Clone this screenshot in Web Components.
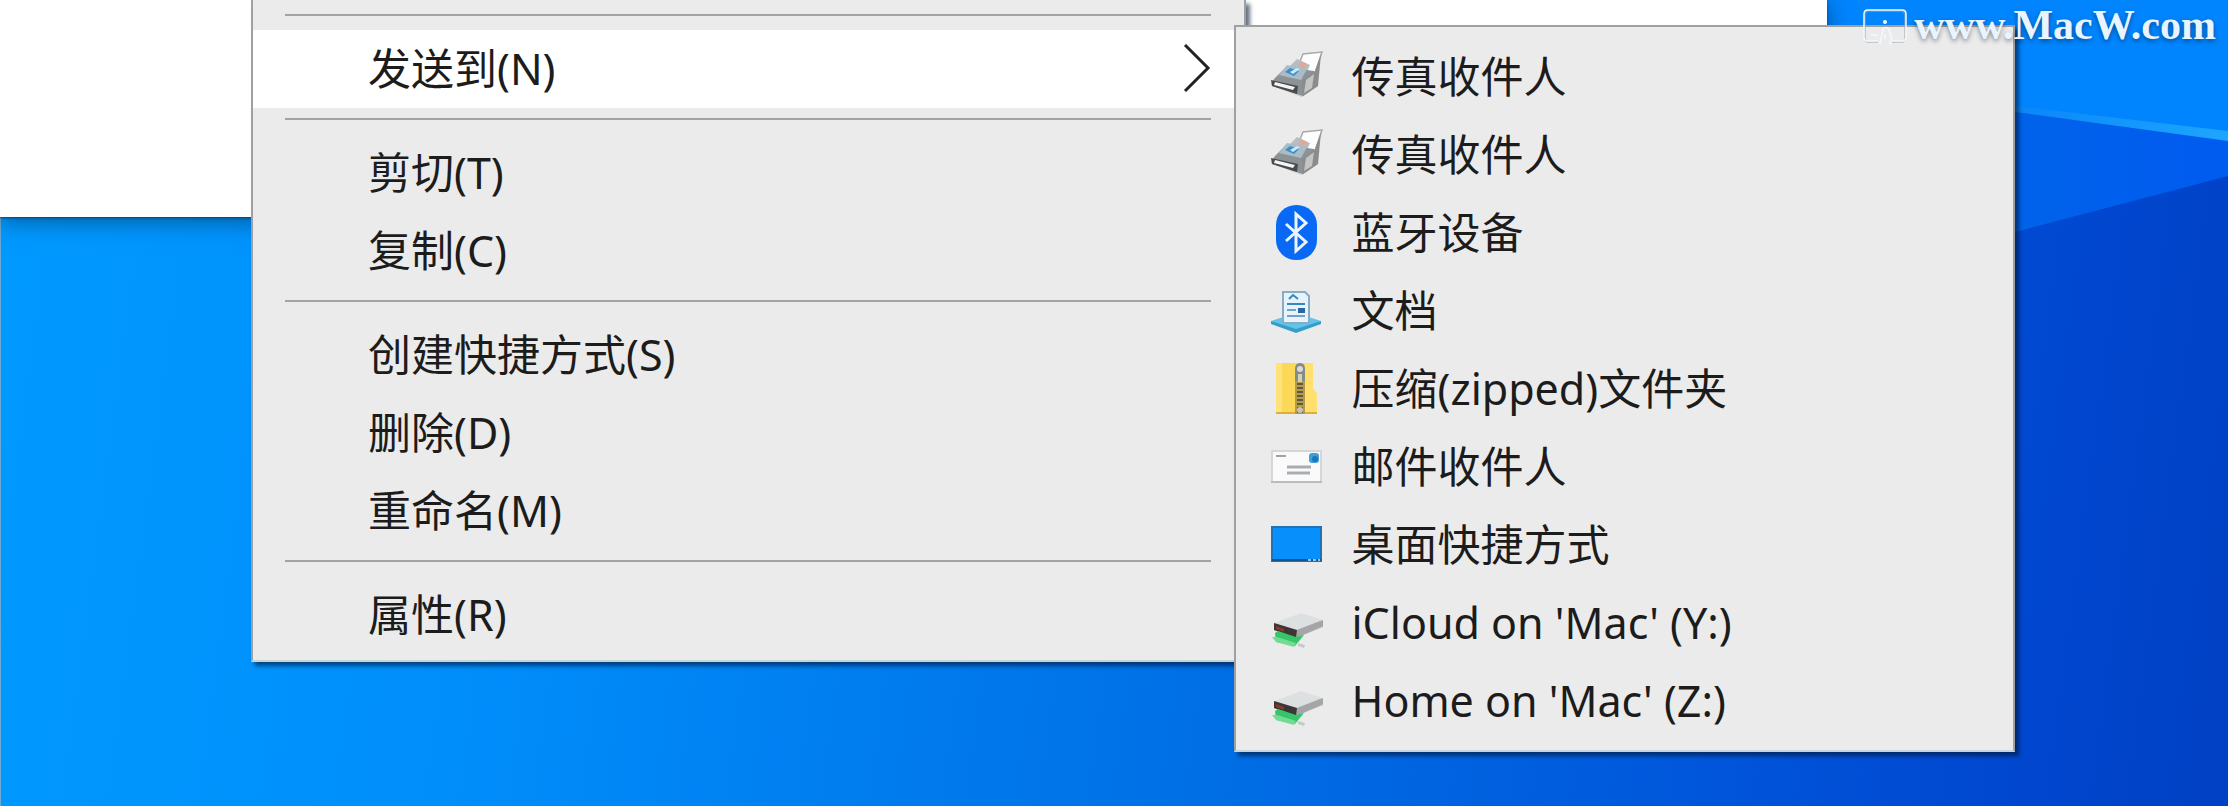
<!DOCTYPE html>
<html lang="zh-CN">
<head>
<meta charset="utf-8">
<title>发送到</title>
<style>
    html, body {
        margin: 0;
        height: 100%;
        overflow: hidden;
    }

    body {
        font-family: "Noto Sans", "Noto Sans CJK SC", sans-serif;
        font-size: 43px;
        line-height: 78px;
        color: #1c1c1c;
    }
</style>
</head>
<body>
<desk-top>
    <site-mark slot="mark">www.MacW.com</site-mark>
    <context-menu class="main" aria-label="文件">
        <menu-separator></menu-separator>
        <menu-item active arrow>发送到(N)</menu-item>
        <menu-separator></menu-separator>
        <menu-item>剪切(T)</menu-item>
        <menu-item>复制(C)</menu-item>
        <menu-separator></menu-separator>
        <menu-item>创建快捷方式(S)</menu-item>
        <menu-item>删除(D)</menu-item>
        <menu-item>重命名(M)</menu-item>
        <menu-separator></menu-separator>
        <menu-item>属性(R)</menu-item>
    </context-menu>
    <context-menu class="sub" aria-label="发送到">
        <menu-item icon="fax">传真收件人</menu-item>
        <menu-item icon="fax">传真收件人</menu-item>
        <menu-item icon="bluetooth">蓝牙设备</menu-item>
        <menu-item icon="documents">文档</menu-item>
        <menu-item icon="zip">压缩(zipped)文件夹</menu-item>
        <menu-item icon="mail">邮件收件人</menu-item>
        <menu-item icon="desktop">桌面快捷方式</menu-item>
        <menu-item icon="drive">iCloud on 'Mac' (Y:)</menu-item>
        <menu-item icon="drive">Home on 'Mac' (Z:)</menu-item>
    </context-menu>
</desk-top>

<script>
const icons = {
    fax: `
        <path d="M2 35 L10 39 L34 48 L50 37 L46 30 Z" fill="#c9c9c9"/>
        <path d="M31 15 L35 5 L54 3 L47 24 L36 24 Z" fill="#fdfdfd" stroke="#a6a9ab" stroke-width="1.5"/>
        <path d="M20 19 L29 10 L42 16 L38 25 L22 26 Z" fill="#b5bec4"/>
        <path d="M33 12 l6 3 -3 5 -6 -3z" fill="#dda99a"/>
        <path d="M6 30 L18 18 L46 22 L48 38 L35 47 L4 37 Z" fill="#8c9295"/>
        <path d="M34 32 L47 22 L53 5 L50 37 L35 47 Z" fill="#8b8d8c"/>
        <path d="M38 31 L46 25 L44 39 L36 44 Z" fill="#c3c4c4"/>
        <path d="M11 26 L19 16 L39 20 L33 31 Z" fill="#a9bdc9"/>
        <path d="M17 23 l5 -4 9 3 -5 5z" fill="#3d8fc4"/>
        <path d="M22 23 l7 -4 3 1 -7 5z" fill="#c5eaff"/>
        <path d="M3 31 L30 37 L29 45 L4 37 Z" fill="#474b4e"/>
        <path d="M7 33 L27 38 L25 41 L6 36 Z" fill="#f3f3f3"/>`,
    bluetooth: `
        <rect x="8" y="0" width="41" height="55" rx="20" fill="#0a69f4"/>
        <path d="M18 19 L38 37 L28 46 V9 L38 18 L18 36" fill="none" stroke="#eaf5ff" stroke-width="3"/>`,
    documents: `
        <path d="M3 38 L28 30 L53 38 L28 49 Z" fill="#62c4e8"/>
        <path d="M3 38 L28 46 L53 38 V41 L28 50 L3 41 Z" fill="#329ec9"/>
        <path d="M15 9 H37 L41 13 V40 H15 Z" fill="#e4f3fc" stroke="#8aabc4" stroke-width="2"/>
        <path d="M21 16 l4 -4 5 4 M19 21 H37" fill="none" stroke="#3988bd" stroke-width="2"/>
        <path d="M19 27 H28 M19 33 H37" stroke="#7c9fbc" stroke-width="2"/>
        <rect x="30" y="25" width="7" height="5" fill="#2d66a3"/>`,
    zip: `
        <path d="M8 2 H45 V28 L49 33 V53 H8 Z" fill="#fbd858"/>
        <path d="M8 2 H14 V53 H8 Z" fill="#ffe27b"/>
        <path d="M37 2 H45 V28 L49 33 V53 H37 Z" fill="#ffe06c"/>
        <path d="M8 52 H49" stroke="#e0ae31" stroke-width="2"/>
        <path d="M27 10 H37 V53 H27 Z" fill="#b49a4a"/>
        <path d="M32 18 V53" stroke="#5f5a3c" stroke-width="6" stroke-dasharray="2 2"/>
        <path d="M27 20 V8 Q27 2 32 2 Q37 2 37 8 V20 Z" fill="#858b89"/>
        <circle cx="32" cy="8" r="3" fill="#d7dad7"/>
        <path d="M30 13 h4 v8 h-4z" fill="#d2d2b2"/>
        <circle cx="32" cy="49" r="3" fill="#c9c5b2"/>`,
    mail: `
        <rect x="4" y="12" width="49" height="31" fill="#fafafa" stroke="#d4d6d8" stroke-width="2"/>
        <path d="M3 43 H54" stroke="#b9bcbf" stroke-width="2"/>
        <path d="M8 17 H18" stroke="#9ba3aa" stroke-width="2"/>
        <path d="M19 28 H43 M19 34 H42" stroke="#a9adb1" stroke-width="3"/>
        <rect x="41" y="14" width="10" height="10" rx="3" fill="#3d9ed9"/>
        <circle cx="47" cy="20" r="3" fill="#1f77b7"/>`,
    desktop: `
        <rect x="4" y="10" width="49" height="34" fill="#078ffb" stroke="#2072b5" stroke-width="2"/>
        <path d="M4 43 H53" stroke="#17568c" stroke-width="2"/>
        <path d="M40 43 H52" stroke="#8fc5ee" stroke-width="2" stroke-dasharray="3 2"/>`,
    drive: `
        <path d="M6 29 L34 20 L55 27 V32 L28 43 L6 35 Z" fill="#b9bcbd"/>
        <path d="M6 28 L33 18 L55 25 L29 35 Z" fill="#dde0e0"/>
        <path d="M29 35 L55 25 V31 L28 43 Z" fill="#a3a5a6"/>
        <path d="M6 28 L29 35 L28 43 L6 35 Z" fill="#3c3634"/>
        <path d="M8 31 L16 34 V37 L8 34 Z" fill="#8d382f"/>
        <path d="M7 38 L10 36 L28 42 L36 40 L27 51 L8 47 Z" fill="#36c568"/>
        <path d="M4 42 L9 42 L28 48 L26 52 L8 47 Z" fill="#72dc95"/>
        <path d="M30 48 L37 50 L36 53 L30 51 Z" fill="#c5cbc8"/>`
};

class DeskTop extends HTMLElement {
    constructor() {
        super();
        this.attachShadow({mode: "open"}).innerHTML = `
            <style>
                :host {
                    display: block;
                    position: relative;
                    height: 100%;
                    overflow: hidden;
                    background: #0078ef;
                }

                .wallpaper {
                    position: absolute;
                    inset: 0;
                    width: 100%;
                    height: 100%;
                }

                .window {
                    position: absolute;
                    top: 0;
                    left: 0;
                    width: 82%;
                    height: 217px;
                    background: #fff;
                    box-shadow: 0 1px 2px #00456f, 0 4px 22px rgba(0, 30, 60, 0.5);
                }

                .menus {
                    position: relative;
                    display: flex;
                    align-items: flex-start;
                    padding: 0 213px 0 251px;
                }

                ::slotted(.main) {
                    flex: 995;
                    padding-top: 4px;
                    padding-bottom: 6px;
                    border-top: 0;
                    --indent: 115px;
                }

                ::slotted(.sub) {
                    flex: 781;
                    margin: 25px 0 0 -12px;
                    padding: 11px 0 10px;
                    --indent: 32px;
                }
            </style>
            <svg class="wallpaper" viewBox="0 0 2228 806" preserveAspectRatio="none" aria-hidden="true">
                <defs>
                    <linearGradient id="base" gradientUnits="userSpaceOnUse" x1="0" y1="420" x2="2228" y2="720">
                        <stop offset="0" stop-color="#0099ff"/>
                        <stop offset="0.22" stop-color="#008efb"/>
                        <stop offset="0.55" stop-color="#006fe6"/>
                        <stop offset="0.8" stop-color="#0053d9"/>
                        <stop offset="0.92" stop-color="#0046ce"/>
                        <stop offset="1" stop-color="#0041c5"/>
                    </linearGradient>
                    <linearGradient id="beam">
                        <stop offset="0" stop-color="#0064e9"/>
                        <stop offset="1" stop-color="#005bf0"/>
                    </linearGradient>
                    <linearGradient id="edge">
                        <stop offset="0" stop-color="#0a86f8"/>
                        <stop offset="1" stop-color="#1da6ff"/>
                    </linearGradient>
                </defs>
                <path d="M0 0H2228V806H0Z" fill="url(#base)"/>
                <path d="M1800 0H2228V140L2015 108L1800 80Z" fill="#0085ff"/>
                <path d="M1980 106L2228 140V176L2015 232L1980 240Z" fill="url(#beam)"/>
                <path d="M2015 106L2228 131V141L2015 112Z" fill="url(#edge)"/>
                <path d="M0 0V806" stroke="#6fa9cf" stroke-width="2"/>
            </svg>
            <div class="window"></div>
            <div class="menus"><slot></slot></div>
            <slot name="mark"></slot>`;
    }
}

class ContextMenu extends HTMLElement {
    constructor() {
        super();
        this.attachShadow({mode: "open"}).innerHTML = `
            <style>
                :host {
                    display: block;
                    min-width: 0;
                    box-sizing: border-box;
                    background: #ebebeb;
                    border: 2px solid #a0a0a0;
                    border-bottom-color: #c8d4dc;
                    box-shadow: 4px 4px 4px rgba(0, 20, 50, 0.6);
                }
            </style>
            <slot></slot>`;
    }

    connectedCallback() {
        this.setAttribute("role", "menu");
    }
}

class MenuSeparator extends HTMLElement {
    constructor() {
        super();
        this.attachShadow({mode: "open"}).innerHTML = `
            <style>
                :host {
                    display: block;
                    padding: 10px 33px 14px 32px;
                }

                hr {
                    height: 2px;
                    margin: 0;
                    border: 0;
                    background: #a3a3a3;
                }
            </style>
            <hr>`;
    }
}

class MenuItem extends HTMLElement {
    constructor() {
        super();
        this.attachShadow({mode: "open"});
    }

    connectedCallback() {
        const icon = icons[this.getAttribute("icon")];
        this.shadowRoot.innerHTML = `
            <style>
                :host {
                    display: block;
                }

                button {
                    display: flex;
                    align-items: center;
                    width: 100%;
                    height: 78px;
                    padding: 0 33px 0 var(--indent);
                    border: 0;
                    background: none;
                    color: inherit;
                    font: inherit;
                    text-align: left;
                    white-space: nowrap;
                }

                :host([active]) button {
                    background: #fff;
                }

                .icon {
                    width: 56px;
                    height: 56px;
                    margin-right: 28px;
                }

                .arrow {
                    width: 28px;
                    height: 50px;
                    margin-left: auto;
                }
            </style>
            <button type="button" role="menuitem">
                ${icon ? `<svg class="icon" viewBox="0 0 56 56" aria-hidden="true">${icon}</svg>` : ""}
                <span><slot></slot></span>
                ${this.hasAttribute("arrow") ? `
                <svg class="arrow" viewBox="0 0 28 50" aria-hidden="true">
                    <path d="M2 1 L25 24 L2 47" fill="none" stroke="#222" stroke-width="3"/>
                </svg>` : ""}
            </button>`;
    }
}

class SiteMark extends HTMLElement {
    constructor() {
        super();
        this.attachShadow({mode: "open"}).innerHTML = `
            <style>
                :host {
                    position: absolute;
                    top: 0;
                    right: 12px;
                    display: flex;
                    align-items: center;
                    gap: 7px;
                    height: 50px;
                    color: #e8f4ff;
                    font: bold 42px/50px "Liberation Serif", serif;
                    text-shadow: 0 2px 5px rgba(0, 0, 0, 0.45);
                }

                svg {
                    width: 44px;
                    height: 38px;
                    margin-top: 6px;
                }
            </style>
            <svg viewBox="0 0 44 38" fill="none" aria-hidden="true">
                <path d="M15 33 H6 Q2 33 2 29 V6 Q2 2 6 2 H38 Q42 2 42 6 V29 Q42 33 38 33 H29" stroke="#9aa5ac" stroke-opacity="0.5" stroke-width="2"/>
                <path d="M15 32 H5 Q1 32 1 28 V5 Q1 1 5 1 H39 Q43 1 43 5 V28 Q43 32 39 32 H29 L26 20 Q23 17 20 20 L17 35 M8 26 H15 M22 25 V30 M26 32 L28 36" stroke="#f4faff" stroke-width="1.5"/>
                <circle cx="22" cy="13" r="2" fill="#f4faff"/>
            </svg>
            <span><slot></slot></span>`;
    }
}

customElements.define("desk-top", DeskTop);
customElements.define("context-menu", ContextMenu);
customElements.define("menu-separator", MenuSeparator);
customElements.define("menu-item", MenuItem);
customElements.define("site-mark", SiteMark);
</script>
</body>
</html>
